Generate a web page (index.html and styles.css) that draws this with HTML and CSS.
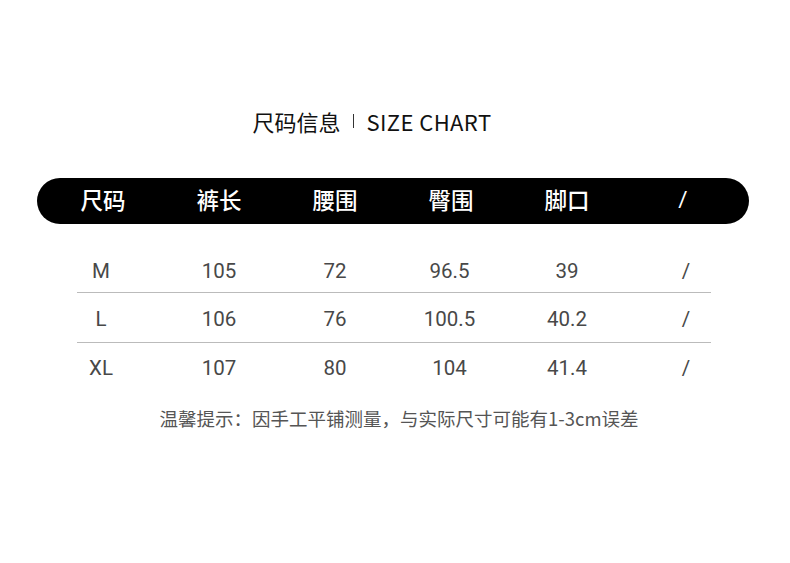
FILE: index.html
```html
<!DOCTYPE html>
<html lang="zh">
<head>
<meta charset="utf-8">
<link rel="stylesheet" href="styles.css">
</head>
<body>
<div class="page">
  <h1 class="title"><span>尺码信息</span><span class="sep"></span><span class="en">SIZE CHART</span></h1>
  <div class="head">
    <div>尺码</div><div>裤长</div><div>腰围</div><div>臀围</div><div>脚口</div><div class="slash">/</div>
  </div>
  <div class="body">
    <div class="row"><div>M</div><div>105</div><div>72</div><div>96.5</div><div>39</div><div>/</div></div>
    <div class="row"><div>L</div><div>106</div><div>76</div><div>100.5</div><div>40.2</div><div>/</div></div>
    <div class="row"><div>XL</div><div>107</div><div>80</div><div>104</div><div>41.4</div><div>/</div></div>
  </div>
  <p class="note">温馨提示：因手工平铺测量，与实际尺寸可能有1-3cm误差</p>
</div>
</body>
</html>
```
FILE: styles.css
```css
html, body { margin: 0; padding: 0; background: #fff; }
body { font-family: "Noto Sans CJK SC", "Noto Sans", sans-serif; color: #222; }
.page { width: 790px; height: 563px; padding-top: 104px; box-sizing: border-box; }
.title { margin: 0; display: flex; justify-content: center; align-items: center; font-size: 22px; font-weight: 400; line-height: 34px; color: #111; padding-right: 46px; }
.title .en { letter-spacing: 0.4px; }
.title .sep { display: inline-block; width: 1px; height: 14px; background: #333; margin: 0 13px 0 12px; }
.head { margin: 40px 41px 0 37px; height: 46px; background: #000; border-radius: 23px; display: grid; grid-template-columns: repeat(6, 116px); padding: 0 8px; align-items: center; color: #fff; font-size: 22.5px; font-weight: 500; }
.head div { text-align: center; line-height: 42px; padding-bottom: 4px; }
.head .slash { font-family: "Roboto", sans-serif; font-weight: 400; }
.body { margin: 23px 41px 0 37px; padding: 0 8px; }
.row { position: relative; display: grid; grid-template-columns: repeat(6, 116px); align-items: center; font-family: "Roboto", "Noto Sans", sans-serif; font-size: 20.5px; color: #484848; height: 48px; padding-top: 3px; box-sizing: border-box; }
.row:first-child { height: 45px; }
.row:nth-child(2) { height: 50px; }
.row + .row::before { content: ""; position: absolute; left: 32px; right: 30px; top: 0; height: 1px; background: #bbb; }
.row div { text-align: center; }
.row div:first-child { padding-right: 4px; }
.row div:nth-child(4) { padding-right: 3px; }
.row div:last-child { padding-left: 6px; }
.note { margin: 15px 0 0; padding-left: 8px; text-align: center; font-size: 18.5px; color: #555; line-height: 26px; }
```
